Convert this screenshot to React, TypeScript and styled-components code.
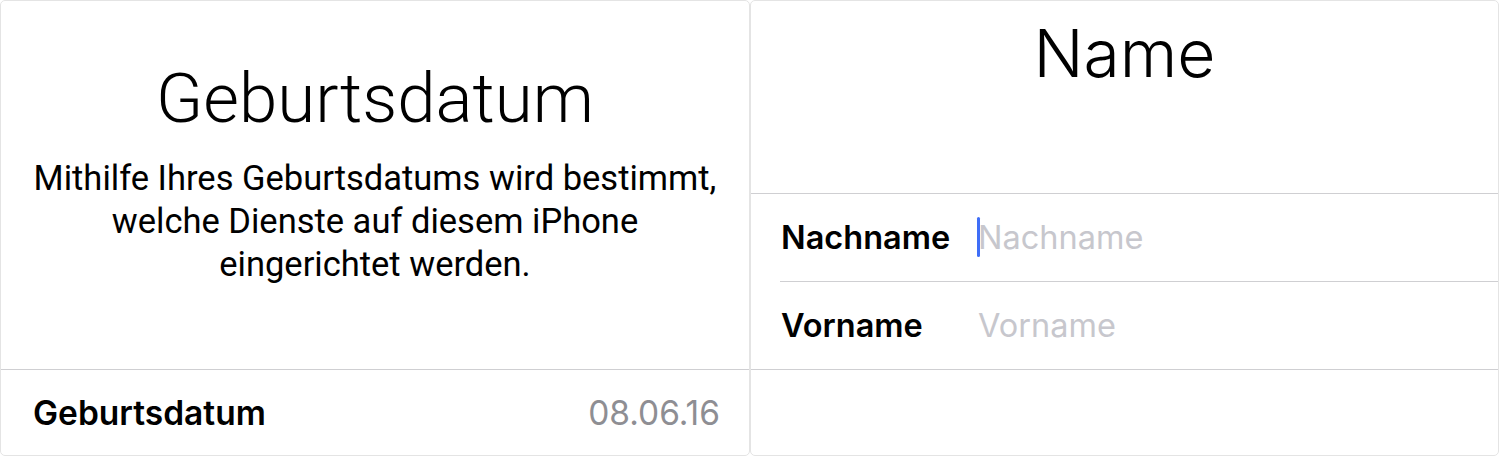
import React from "react";
import styled, { createGlobalStyle } from "styled-components";

const GlobalStyle = createGlobalStyle`
  html, body {
    margin: 0;
    padding: 0;
    background: #ffffff;
  }
  body {
    font-family: Inter, "Liberation Sans", sans-serif;
    -webkit-font-smoothing: antialiased;
  }
`;

export default function App() {
  return (
    <>
      <GlobalStyle />
      <Screens>
        <Card $width={750}>
          <Hero $height={369} $padTop={53}>
            <BirthTitle>Geburtsdatum</BirthTitle>
            <Description>
              Mithilfe Ihres Geburtsdatums wird bestimmt,
              <br />
              welche Dienste auf diesem iPhone
              <br />
              eingerichtet werden.
            </Description>
          </Hero>
          <DateRow>
            <DateLabel>Geburtsdatum</DateLabel>
            <DateValue>08.06.16</DateValue>
          </DateRow>
        </Card>
        <Card $width={749}>
          <Hero $height={193} $padTop={7}>
            <NameTitle>Name</NameTitle>
          </Hero>
          <Form>
            <FieldRow>
              <FieldLabel>Nachname</FieldLabel>
              <FieldInput>
                <Caret />
                <Placeholder>Nachname</Placeholder>
              </FieldInput>
            </FieldRow>
            <FieldRow $last>
              <FieldLabel>Vorname</FieldLabel>
              <FieldInput>
                <Placeholder>Vorname</Placeholder>
              </FieldInput>
            </FieldRow>
          </Form>
        </Card>
      </Screens>
    </>
  );
}

const Screens = styled.div`
  display: flex;
  width: 1499px;
  height: 456px;
`;

const Card = styled.section<{ $width: number }>`
  width: ${(p) => p.$width}px;
  height: 456px;
  box-sizing: border-box;
  border: 1px solid #e4e4e4;
  border-radius: 5px;
  background: #ffffff;
  display: flex;
  flex-direction: column;
  overflow: hidden;
`;

const Hero = styled.div<{ $height: number; $padTop: number }>`
  height: ${(p) => p.$height}px;
  flex: none;
  box-sizing: border-box;
  border-bottom: 1px solid #cfcfd2;
  display: flex;
  flex-direction: column;
  align-items: center;
  padding-top: ${(p) => p.$padTop}px;
`;

const BirthTitle = styled.h1`
  margin: 0;
  font-family: Roboto, "Liberation Sans", sans-serif;
  font-weight: 300;
  font-size: 69px;
  line-height: 90px;
  color: #000;
`;

const Description = styled.p`
  margin: 13px 0 0;
  font-family: Roboto, "Liberation Sans", sans-serif;
  font-weight: 400;
  font-size: 34.5px;
  line-height: 43px;
  text-align: center;
  color: #000;
`;

const DateRow = styled.div`
  flex: 1;
  display: flex;
  align-items: center;
  justify-content: space-between;
  padding: 0 29px 0 32px;
  font-size: 33.5px;
`;

const DateLabel = styled.span`
  font-weight: 600;
  color: #000;
`;

const DateValue = styled.span`
  font-weight: 400;
  color: #8e8e93;
`;

const NameTitle = styled.h1`
  margin: 0;
  font-weight: 300;
  font-size: 66px;
  line-height: 90px;
  color: #000;
`;

const Form = styled.div`
  display: flex;
  flex-direction: column;
  padding-left: 29px;
`;

const FieldRow = styled.div<{ $last?: boolean }>`
  height: 88px;
  box-sizing: border-box;
  display: flex;
  align-items: center;
  border-bottom: 1px solid #cfcfd2;
  margin-left: ${(p) => (p.$last ? -29 : 0)}px;
  padding-left: ${(p) => (p.$last ? 30 : 1)}px;
`;

const FieldLabel = styled.span`
  width: 197px;
  font-size: 32.5px;
  font-weight: 600;
  color: #000;
`;

const FieldInput = styled.div`
  display: flex;
  align-items: center;
  position: relative;
`;

const Caret = styled.span`
  position: absolute;
  left: -1px;
  top: -1px;
  width: 3px;
  height: 40px;
  border-radius: 2px;
  background: #3f6ef7;
`;

const Placeholder = styled.span`
  font-size: 32.5px;
  font-weight: 400;
  color: #c7c7cd;
`;
